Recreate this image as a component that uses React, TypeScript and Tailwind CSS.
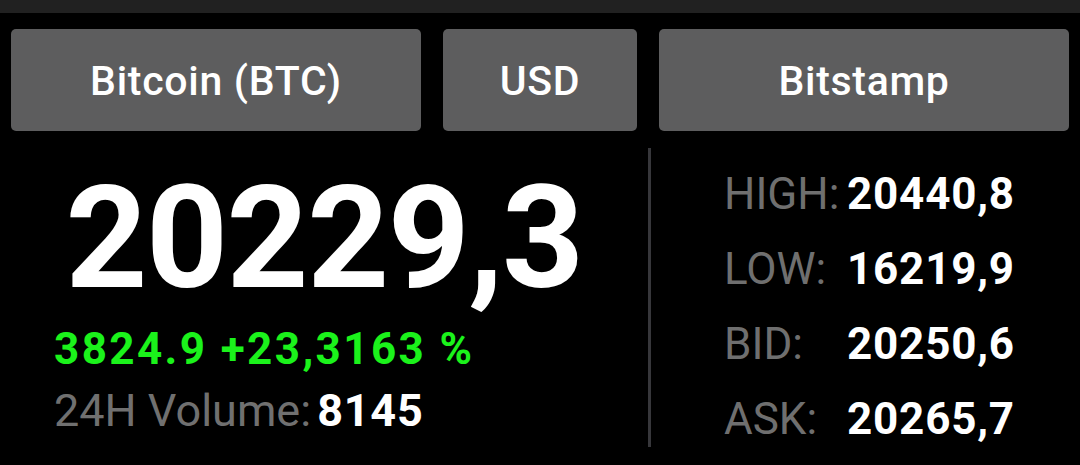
const pickers = [
	{ label: "Bitcoin (BTC)", width: "w-[410px]" },
	{ label: "USD", width: "w-[194px]" },
	{ label: "Bitstamp", width: "w-[410px]" },
]

const stats = [
	{ label: "HIGH:", value: "20440,8" },
	{ label: "LOW:", value: "16219,9" },
	{ label: "BID:", value: "20250,6" },
	{ label: "ASK:", value: "20265,7" },
]

export default function App() {
	return (
		<div className="flex h-[465px] w-[1080px] flex-col overflow-hidden bg-black font-['Roboto',sans-serif] text-white">
			<div className="h-[13px] bg-[#212121]" />
			<div className="flex gap-[22px] px-[11px] pt-[16px]">
				{pickers.map((p) => (
					<button
						key={p.label}
						className={`${p.width} flex h-[102px] items-center justify-center rounded-[5px] bg-[#5d5d5e] pt-[3px] text-[41px] font-medium tracking-[0.7px]`}
					>
						{p.label}
					</button>
				))}
			</div>
			<div className="flex flex-1">
				<PriceColumn />
				<div className="mt-[17px] h-[299px] w-[3px] bg-[#37373b]" />
				<StatsColumn />
			</div>
		</div>
	)
}

function PriceColumn() {
	return (
		<div className="flex w-[648px] flex-col pt-[36px]">
			<div className="text-center text-[143px] font-bold leading-[143px] tracking-[-1.5px]">20229,3</div>
			<div className="mt-[8px] pl-[54px] text-[44px] font-bold leading-[62px] tracking-[2.4px] text-[#1bf21b]">
				3824.9 +23,3163 %
			</div>
			<div className="pl-[54px] text-[45px] leading-[62px]">
				<span className="text-[#707070]">24H Volume:</span>
				<span className="ml-[6px] font-bold tracking-[0.8px]">8145</span>
			</div>
		</div>
	)
}

function StatsColumn() {
	return (
		<div className="flex flex-1 flex-col pl-[73px] pt-[26px]">
			{stats.map((s) => (
				<div key={s.label} className="flex text-[44px] leading-[75px]">
					<span className="w-[123px] text-[#6f6f6f]">{s.label}</span>
					<span className="font-bold tracking-[0.8px]">{s.value}</span>
				</div>
			))}
		</div>
	)
}
